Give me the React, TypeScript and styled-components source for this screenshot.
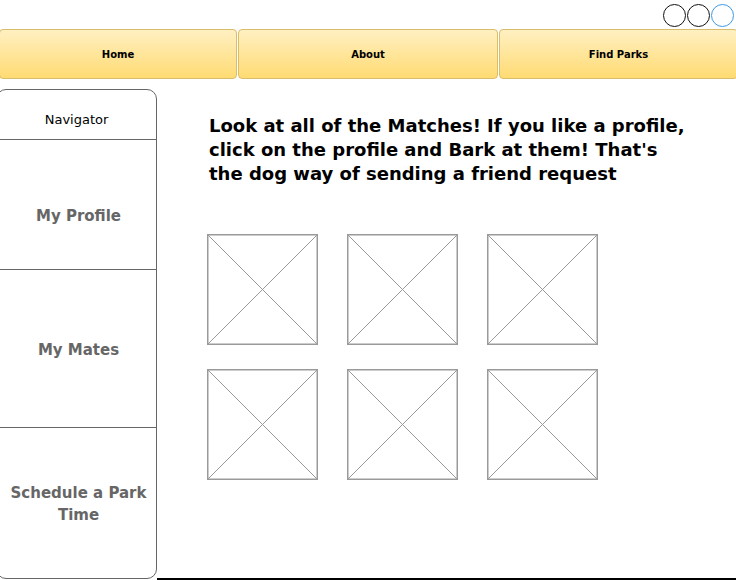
import React from "react";
import styled, { createGlobalStyle } from "styled-components";

const Global = createGlobalStyle`
  html, body { margin: 0; padding: 0; background: #fff; }
  body { font-family: "Comic Sans MS", "DejaVu Sans", sans-serif; overflow: hidden; }
`;

const Page = styled.div`
  width: 736px;
  height: 580px;
  display: flex;
  flex-direction: column;
  overflow: hidden;
`;

const TopBar = styled.div`
  height: 29px;
  display: flex;
  justify-content: flex-end;
  align-items: flex-start;
  padding: 4px 2px 0 0;
  box-sizing: border-box;
  gap: 1px;
`;

const Dot = styled.span<{ $active?: boolean }>`
  width: 23px;
  height: 23px;
  box-sizing: border-box;
  border-radius: 50%;
  border: 1.5px solid ${(p) => (p.$active ? "#3b9be6" : "#111")};
`;

const Nav = styled.nav`
  display: grid;
  grid-template-columns: 238px 260px 1fr;
  gap: 1px;
  height: 50px;
  margin: 0 -2px 0 -1px;
`;

const Tab = styled.a`
  display: flex;
  align-items: center;
  justify-content: center;
  border: 1px solid #d8bd6b;
  border-radius: 4px;
  background: linear-gradient(#fff0c2, #ffdb73);
  color: #000;
  font-size: 10px;
  font-weight: bold;
  text-decoration: none;
`;

const Main = styled.div`
  flex: 1;
  display: flex;
  margin-top: 10px;
`;

const Sidebar = styled.aside`
  width: 161px;
  margin-left: -4px;
  box-sizing: border-box;
  border: 1px solid #666;
  border-radius: 10px;
  display: flex;
  flex-direction: column;
  height: 490px;
`;

const SideHead = styled.div`
  height: 50px;
  box-sizing: border-box;
  padding-top: 9px;
  display: flex;
  align-items: center;
  justify-content: center;
  font-size: 13px;
  border-bottom: 1px solid #666;
  color: #000;
`;

const SideItem = styled.div<{ $h: number; $shift?: number }>`
  height: ${(p) => p.$h}px;
  display: flex;
  align-items: center;
  justify-content: center;
  text-align: center;
  padding: ${(p) => p.$shift ?? 0}px 8px 0 12px;
  box-sizing: border-box;
  color: #666;
  font-size: 15px;
  font-weight: bold;
  line-height: 22px;
  border-bottom: ${(p) => (p.$h ? "1px solid #666" : "none")};
  &:last-child { border-bottom: none; flex: 1; }
`;

const Content = styled.section`
  flex: 1;
  border-bottom: 2px solid #000;
  height: 491px;
  box-sizing: border-box;
  padding: 25px 0 0 52px;
`;

const Heading = styled.h1`
  margin: 0;
  width: 482px;
  font-size: 18px;
  line-height: 24px;
  font-weight: bold;
  color: #000;
`;

const Grid = styled.div`
  margin-top: 48px;
  margin-left: -2px;
  display: grid;
  grid-template-columns: repeat(3, 111px);
  grid-auto-rows: 111px;
  column-gap: 29px;
  row-gap: 24px;
`;

const Placeholder = () => (
  <svg width="111" height="111" viewBox="0 0 111 111">
    <rect x="0.75" y="0.75" width="109.5" height="109.5" fill="#fff" stroke="#9a9a9a" strokeWidth="1.5" />
    <line x1="1" y1="1" x2="110" y2="110" stroke="#9a9a9a" strokeWidth="1" />
    <line x1="110" y1="1" x2="1" y2="110" stroke="#9a9a9a" strokeWidth="1" />
  </svg>
);

export default function App() {
  return (
    <Page>
      <Global />
      <TopBar>
        <Dot />
        <Dot />
        <Dot $active />
      </TopBar>
      <Nav>
        <Tab>Home</Tab>
        <Tab>About</Tab>
        <Tab>Find Parks</Tab>
      </Nav>
      <Main>
        <Sidebar>
          <SideHead>Navigator</SideHead>
          <SideItem $h={130} $shift={22}>My Profile</SideItem>
          <SideItem $h={158} $shift={3}>My Mates</SideItem>
          <SideItem $h={0} $shift={2}>Schedule a Park Time</SideItem>
        </Sidebar>
        <Content>
          <Heading>
            Look at all of the Matches! If you like a profile, click on the profile and Bark at them! That's the dog way of sending a friend request
          </Heading>
          <Grid>
            {Array.from({ length: 6 }).map((_, i) => (
              <Placeholder key={i} />
            ))}
          </Grid>
        </Content>
      </Main>
    </Page>
  );
}
